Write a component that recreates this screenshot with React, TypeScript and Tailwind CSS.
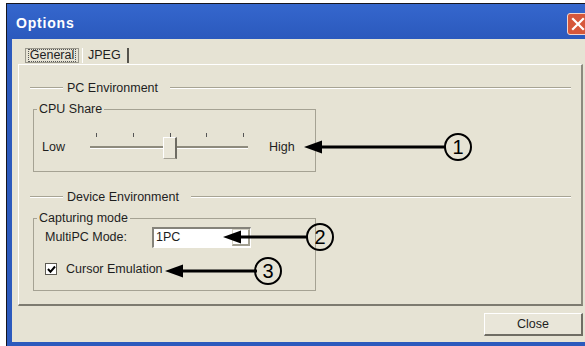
import type { ReactNode } from "react"

function Separator({ label }: { label: string }) {
  return (
    <div className="flex items-center h-[14px] pl-[11px] pr-[10px]">
      <div className="w-[33px] h-[2px] border-t border-[#a7a494] border-b border-b-white" />
      <span className="ml-[4px] mr-[12px] whitespace-nowrap">{label}</span>
      <div className="flex-1 h-[2px] border-t border-[#a7a494] border-b border-b-white" />
    </div>
  )
}

function Group({ label, h, children }: { label: string; h: string; children: ReactNode }) {
  return (
    <div className={`relative ml-[14px] w-[283px] ${h} border border-[#a5a293]`}>
      <span className="absolute -top-[9px] left-[3px] bg-[#e6e3d4] px-[2px] leading-[16px]">{label}</span>
      {children}
    </div>
  )
}

function Slider() {
  const ticks = [6, 43, 80, 116, 153]
  return (
    <div className="relative w-[160px] h-[30px]">
      {ticks.map((x) => (
        <div key={x} className="absolute top-[1px] w-[1px] h-[4px] bg-[#555]" style={{ left: x }} />
      ))}
      <div className="absolute left-0 top-[14px] w-[158px] h-[3px] border-t-2 border-[#8e8b7d] border-b border-b-white" />
      <div className="absolute left-[73px] top-[5px] w-[14px] h-[22px] bg-[#e9e6d8] border-l border-t border-white border-r-2 border-r-[#6d6b62] border-b border-b-[#a4a194]" />
    </div>
  )
}

function Arrow({ left, top, w }: { left: number; top: number; w: number }) {
  return (
    <svg className="absolute" style={{ left, top }} width={w} height={16} viewBox={`0 0 ${w} 16`}>
      <line x1={14} y1={8} x2={w} y2={8} stroke="#000" strokeWidth={3} />
      <polygon points="0,8 18,1.5 18,14.5" fill="#000" />
    </svg>
  )
}

function Mark({ left, top, n }: { left: number; top: number; n: string }) {
  return (
    <div
      className="absolute w-[28px] h-[28px] rounded-full border-2 border-black flex items-center justify-center text-[20px] leading-none text-black font-['Liberation_Sans',Arial,sans-serif]"
      style={{ left, top }}
    >
      {n}
    </div>
  )
}

export default function App() {
  return (
    <div className="relative w-[585px] h-[346px] overflow-hidden bg-white font-['Liberation_Sans',Arial,sans-serif] text-[12.5px] text-[#1e1e1e]">
      <div className="ml-[6px] mt-[3px] w-[600px] h-[350px] border border-[#16161e] bg-[#2c5abd] flex flex-col">
        <div className="h-[35px] flex items-center pt-[4px] pl-[9px] pr-[16px] bg-gradient-to-b from-[#3567cd] to-[#2b59bd]">
          <span className="text-white font-bold text-[14px] tracking-[0.8px]">Options</span>
          <div className="ml-auto w-[22px] h-[22px] rounded-[3px] border border-[#f3d6cc] bg-[#d6573b] flex items-center justify-center">
            <svg width="14" height="14" viewBox="0 0 14 14">
              <path d="M2 2 L12 12 M12 2 L2 12" stroke="#fff" strokeWidth="2.2" strokeLinecap="square" />
            </svg>
          </div>
        </div>
        <div className="mx-[5px] w-[578px] h-[303px] bg-[#e6e3d4] flex flex-col px-[6px]">
          <div className="flex items-end h-[24px] pl-[7px]">
            <div className="h-[15px] w-[54px] border border-[#9a988c] flex items-center justify-center">
              <span className="border border-dotted border-[#555] px-[1px] leading-[11px]">General</span>
            </div>
            <div className="ml-[3px] h-[15px] w-[47px] border-l border-white border-r-2 border-r-[#55534c] flex items-center pl-[5px]">
              JPEG
            </div>
          </div>
          <div className="mt-[1px] w-[565px] h-[242px] border-l border-t border-white border-r-2 border-b-2 border-r-[#8c8a7e] border-b-[#7d7b70] flex flex-col">
            <div className="mt-[16px]">
              <Separator label="PC Environment" />
            </div>
            <div className="mt-[14px]">
              <Group label="CPU Share" h="h-[63px]">
                <div className="flex items-center pt-[22px] pl-[8px]">
                  <span className="w-[48px]">Low</span>
                  <Slider />
                  <span className="ml-[19px]">High</span>
                </div>
              </Group>
            </div>
            <div className="mt-[18px]">
              <Separator label="Device Environment" />
            </div>
            <div className="mt-[14px]">
              <Group label="Capturing mode" h="h-[73px]">
                <div className="flex items-center pt-[8px] pl-[11px]">
                  <span className="w-[107px]">MultiPC Mode:</span>
                  <div className="flex w-[99px] h-[21px] bg-white border-l-2 border-t-2 border-[#85837a] border-r border-b border-r-white border-b-white">
                    <span className="pl-[2px] leading-[17px] flex-1">1PC</span>
                    <div className="w-[18px] h-[17px] border-r-2 border-b-2 border-[#a3a092] border-l border-t border-l-[#d6d3c6] border-t-[#d6d3c6]" />
                  </div>
                </div>
                <div className="flex items-center mt-[12px] pl-[11px]">
                  <div className="w-[12px] h-[12px] bg-white border border-[#5c5a52] flex items-center justify-center">
                    <svg width="9" height="9" viewBox="0 0 9 9">
                      <path d="M1 4 L3.5 6.8 L8 1.5" stroke="#000" strokeWidth="2" fill="none" />
                    </svg>
                  </div>
                  <span className="ml-[9px]">Cursor Emulation</span>
                </div>
              </Group>
            </div>
          </div>
          <div className="flex justify-end w-[565px] mt-[7px]">
            <button className="w-[99px] h-[23px] bg-[#e9e6d9] border-l border-t border-white border-r-2 border-b-2 border-r-[#6f6d64] border-b-[#6f6d64] text-[12.5px]">
              Close
            </button>
          </div>
        </div>
      </div>

      <Arrow left={304} top={139} w={142} />
      <Mark left={444} top={133} n="1" />
      <Arrow left={223} top={229} w={85} />
      <Mark left={306} top={223} n="2" />
      <Arrow left={165} top={263} w={92} />
      <Mark left={254} top={257} n="3" />
    </div>
  )
}
